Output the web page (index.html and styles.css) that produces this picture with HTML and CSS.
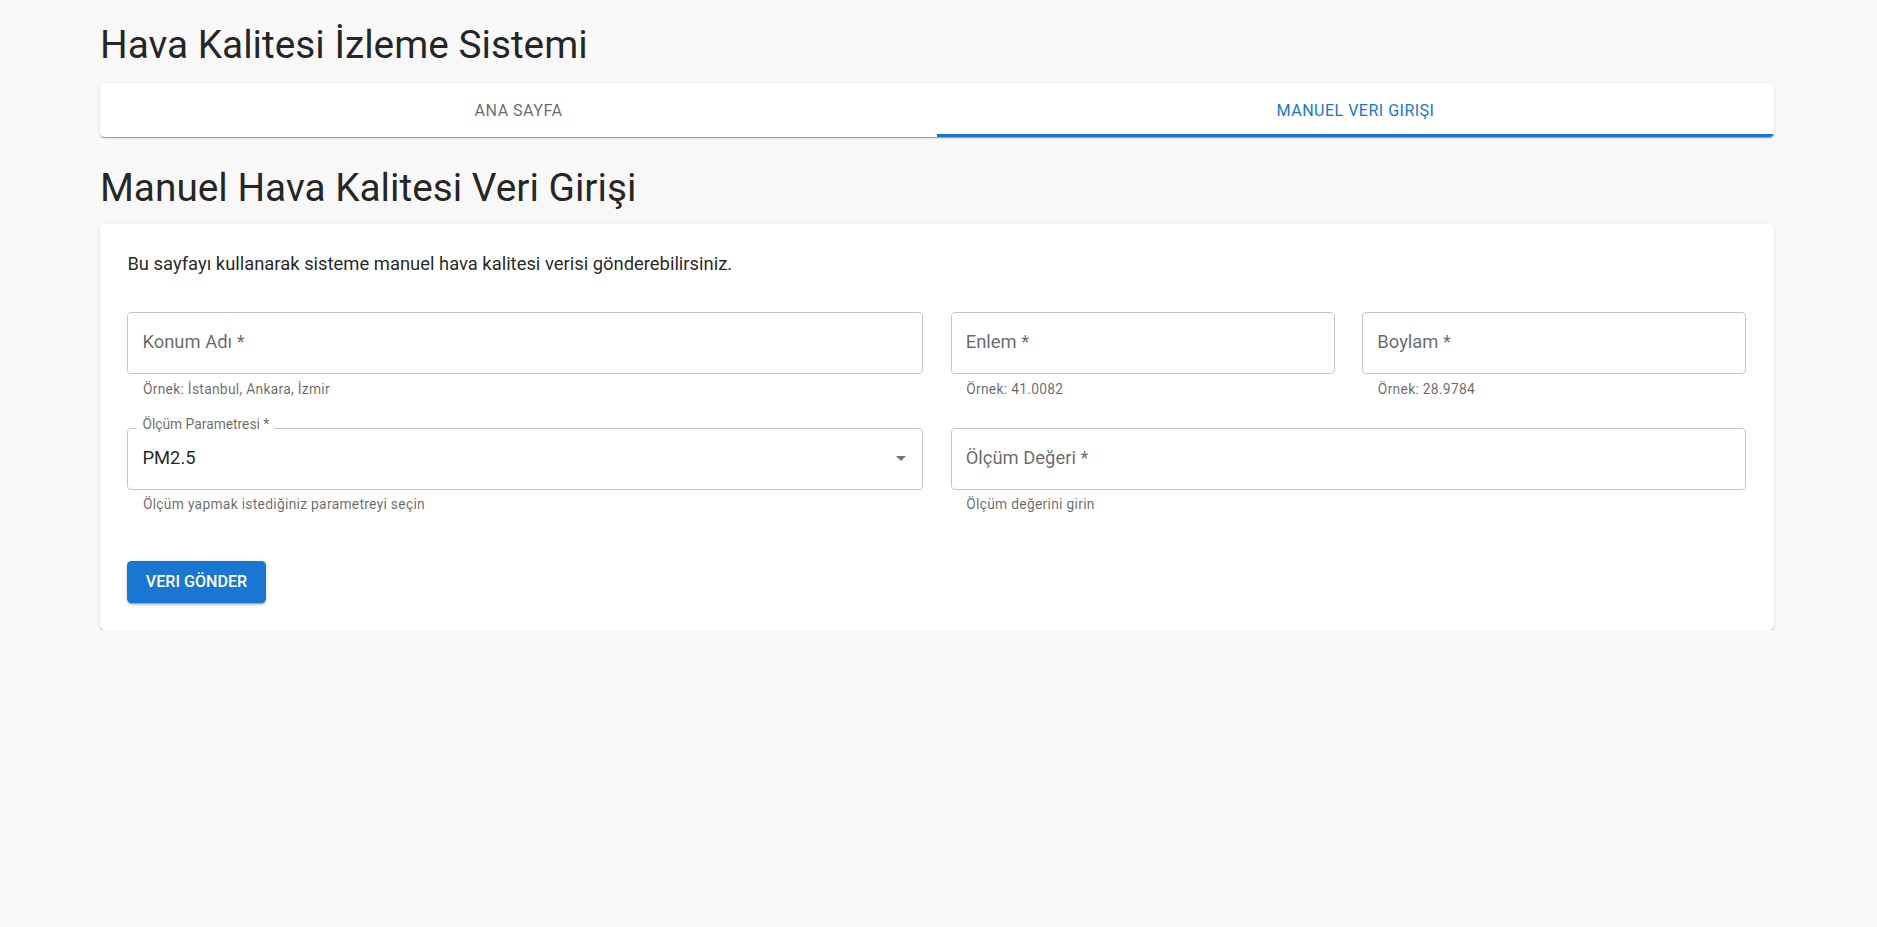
FILE: index.html
```html
<!DOCTYPE html>
<html lang="en">
<head>
<meta charset="utf-8">
<title>Hava Kalitesi İzleme Sistemi</title>
<link rel="stylesheet" href="styles.css">
</head>
<body>
<div class="container">
  <h1 class="page-title">Hava Kalitesi İzleme Sistemi</h1>
  <nav class="tabs">
    <div class="tab">Ana Sayfa</div>
    <div class="tab tab-active">Manuel Veri Girişi</div>
  </nav>
  <h2 class="section-title">Manuel Hava Kalitesi Veri Girişi</h2>
  <section class="card">
    <p class="intro">Bu sayfayı kullanarak sisteme manuel hava kalitesi verisi gönderebilirsiniz.</p>
    <div class="form-grid">
      <div class="form-item span-2">
        <div class="field"><span class="field-label">Konum Adı *</span></div>
        <div class="helper">Örnek: İstanbul, Ankara, İzmir</div>
      </div>
      <div class="form-item">
        <div class="field"><span class="field-label">Enlem *</span></div>
        <div class="helper">Örnek: 41.0082</div>
      </div>
      <div class="form-item">
        <div class="field"><span class="field-label">Boylam *</span></div>
        <div class="helper">Örnek: 28.9784</div>
      </div>
      <div class="form-item span-2">
        <div class="field field-select">
          <span class="float-label">Ölçüm Parametresi *</span>
          <span class="field-value">PM2.5</span>
          <svg class="select-arrow" width="10" height="5" viewBox="0 0 10 5"><path d="M0 0 L5 5 L10 0 Z" fill="#757575"/></svg>
        </div>
        <div class="helper">Ölçüm yapmak istediğiniz parametreyi seçin</div>
      </div>
      <div class="form-item span-2">
        <div class="field"><span class="field-label">Ölçüm Değeri *</span></div>
        <div class="helper">Ölçüm değerini girin</div>
      </div>
    </div>
    <button class="submit-btn" type="button">Veri Gönder</button>
  </section>
</div>
</body>
</html>
```

FILE: styles.css
```css
html, body {
  margin: 0;
  padding: 0;
}

body {
  background: #f8f8f8;
  font-family: Roboto, "Liberation Sans", sans-serif;
  color: rgba(0, 0, 0, 0.87);
}

.container {
  width: 1674px;
  margin-left: 100px;
  padding-top: 21px;
}

.page-title,
.section-title {
  font-size: 38.8px;
  font-weight: 400;
  line-height: 48px;
  margin: 0;
}

.tabs {
  margin-top: 14px;
  height: 54px;
  display: flex;
  background: #fff;
  border-radius: 4.6px;
  box-shadow: 0px 2px 1px -1px rgba(0,0,0,0.2), 0px 1px 1px 0px rgba(0,0,0,0.14), 0px 1px 3px 0px rgba(0,0,0,0.12);
  overflow: hidden;
}

.tab {
  flex: 1;
  display: flex;
  align-items: center;
  justify-content: center;
  font-size: 16.1px;
  font-weight: 400;
  letter-spacing: 0.02857em;
  text-transform: uppercase;
  color: rgba(0, 0, 0, 0.6);
}

.tab-active {
  color: #1976d2;
  box-shadow: inset 0 -3px 0 #1976d2;
}

.section-title {
  margin-top: 26.7px;
}

.card {
  margin-top: 12.3px;
  background: #fff;
  border-radius: 4.6px;
  padding: 26px 27.6px 27px 27.4px;
  box-shadow: 0px 2px 1px -1px rgba(0,0,0,0.2), 0px 1px 1px 0px rgba(0,0,0,0.14), 0px 1px 3px 0px rgba(0,0,0,0.12);
}

.intro {
  margin: 0;
  font-size: 18.4px;
  line-height: 27.6px;
}

.form-grid {
  margin-top: 34.8px;
  display: grid;
  grid-template-columns: repeat(4, 1fr);
  column-gap: 27.6px;
  row-gap: 27px;
}

.span-2 {
  grid-column: span 2;
}

.field {
  position: relative;
  height: 62px;
  box-sizing: border-box;
  border: 1px solid #c4c4c4;
  border-radius: 4.6px;
  display: flex;
  align-items: center;
  padding: 0 14px 2px 14px;
}

.field-label {
  font-size: 18.4px;
  line-height: 1;
  color: rgba(0, 0, 0, 0.6);
}

.field-value {
  font-size: 18.4px;
  line-height: 1;
  color: rgba(0, 0, 0, 0.87);
  flex: 1;
}

.float-label {
  position: absolute;
  top: -11px;
  left: 9px;
  padding: 0 5px;
  background: #fff;
  font-size: 13.8px;
  line-height: 1;
  color: rgba(0, 0, 0, 0.6);
}

.select-arrow {
  margin-right: 2.5px;
  margin-top: 2px;
}

.helper {
  margin-top: 3.5px;
  margin-left: 15.5px;
  font-size: 13.8px;
  line-height: 23px;
  color: rgba(0, 0, 0, 0.6);
  letter-spacing: 0.3px;
}

.submit-btn {
  display: block;
  margin-top: 44.8px;
  border: none;
  border-radius: 4.6px;
  background: #1976d2;
  color: #fff;
  font-family: Roboto, "Liberation Sans", sans-serif;
  font-size: 16.1px;
  font-weight: 500;
  line-height: 27.6px;
  letter-spacing: 0;
  text-transform: uppercase;
  padding: 6.9px 18.4px;
  box-shadow: 0px 3px 1px -2px rgba(0,0,0,0.2), 0px 2px 2px 0px rgba(0,0,0,0.14), 0px 1px 5px 0px rgba(0,0,0,0.12);
}
```
